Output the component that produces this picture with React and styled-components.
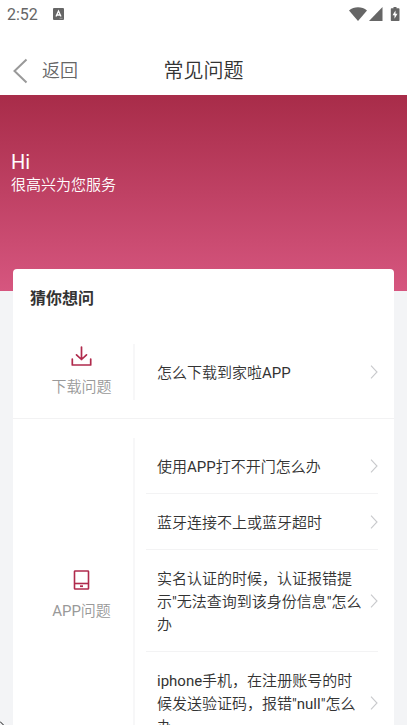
import React from "react";
import styled, { createGlobalStyle } from "styled-components";

const GlobalStyle = createGlobalStyle`
  * { box-sizing: border-box; }
  body {
    margin: 0;
    background: #f3f4f6;
    color: #333;
    font-family: Roboto, "Noto Sans CJK SC DemiLight", "Noto Sans CJK SC", sans-serif;
    font-weight: 400;
  }
`;

const Screen = styled.div`
  position: relative;
  height: 100vh;
  overflow: hidden;
  background: #f3f4f6;
`;

const StatusBar = styled.div`
  display: flex;
  align-items: center;
  justify-content: space-between;
  height: 28px;
  padding: 0 7px;
  background: #fff;
  color: #666;
`;

const StatusGroup = styled.div`
  display: flex;
  align-items: center;
  gap: ${(p) => p.$gap}px;
`;

const Clock = styled.time`
  padding-top: 2px;
  font-size: 16px;
  line-height: 26px;
`;

const Icon = styled.svg`
  display: block;
  flex: none;
`;

const NavBar = styled.header`
  display: grid;
  grid-template-columns: 1fr auto 1fr;
  align-items: center;
  padding: 28px 12px 9px;
  background: #fff;
`;

const BackButton = styled.button`
  display: flex;
  align-items: center;
  justify-self: start;
  gap: 14px;
  padding: 0;
  border: 0;
  background: none;
  color: #666;
  font: inherit;
  font-size: 18px;
  line-height: 28px;
  cursor: pointer;
`;

const Title = styled.h1`
  margin: 0;
  font-size: 20px;
  font-weight: inherit;
  line-height: 30px;
`;

const Hero = styled.section`
  height: 196px;
  padding: 56px 11px 0;
  background: linear-gradient(#a82c49, #d6567f);
  color: #fff;
`;

const Greeting = styled.p`
  margin: 0;
  font-size: ${(p) => (p.$large ? 20 : 15)}px;
  line-height: 23px;
`;

const Card = styled.main`
  margin: -22px 13px 0;
  border-radius: 4px;
  background: #fff;
`;

const CardTitle = styled.h2`
  margin: 0;
  padding: 18px 17px 15px;
  font-family: Roboto, "Noto Sans CJK SC", sans-serif;
  font-size: 16px;
  font-weight: 700;
  line-height: 24px;
`;

const Section = styled.section`
  display: flex;
  padding: 18px 16px 18px 17px;
  border-bottom: 1px solid #f2f2f3;
  & + & { padding-top: 19px; }
`;

const Category = styled.div`
  display: flex;
  flex: none;
  flex-direction: column;
  align-items: center;
  justify-content: center;
  gap: 10px;
  width: 105px;
  border-right: 2px solid #f7f7f8;
`;

const CategoryName = styled.h3`
  margin: 0;
  color: #999;
  font-size: 15px;
  font-weight: inherit;
  line-height: 23px;
`;

const Questions = styled.ul`
  flex: 1;
  min-width: 0;
  margin: 0;
  padding: 0 0 0 11px;
  list-style: none;
`;

const QuestionItem = styled.li`
  border-bottom: 1px solid #f3f3f4;
  &:last-child { border-bottom-color: transparent; }
`;

const QuestionLink = styled.a`
  display: flex;
  align-items: center;
  justify-content: space-between;
  gap: 4px;
  padding: 15px 0 14px 11px;
  color: #333;
  font-size: 15px;
  line-height: 23px;
  text-decoration: none;
`;

const QuestionText = styled.span`
  padding-top: 3px;
`;

const Pointer = styled(Icon)`
  position: absolute;
  bottom: 0;
  left: 0;
`;

const ChevronRight = () => (
  <Icon width="8" height="14" viewBox="0 0 8 14" fill="none" stroke="#c8c9cc" aria-hidden="true">
    <path d="M1 .7 7 7 1 13.3" strokeWidth="1.1" />
  </Icon>
);

const DownloadIcon = () => (
  <Icon width="21" height="20" viewBox="0 0 21 20" fill="none" stroke="#b02a4c" strokeWidth="1.7" strokeLinecap="round" strokeLinejoin="round" aria-hidden="true">
    <path d="M10.500 1v12.500M5.500 8.800l5 4.700 5-4.700M1.300 13v6h18.400V13" />
  </Icon>
);

const PhoneIcon = () => (
  <Icon width="21" height="20" viewBox="0 0 21 20" fill="none" stroke="#b02a4c" strokeWidth="1.600" aria-hidden="true">
    <rect x="3.500" y="1" width="14" height="18" rx=".6" />
    <path d="M3.500 13.500h14" />
    <path d="M9 16.200h3" strokeWidth="1.800" />
  </Icon>
);

const sections = [
  { name: "下载问题", icon: DownloadIcon, questions: ["怎么下载到家啦APP"] },
  {
    name: "APP问题",
    icon: PhoneIcon,
    questions: [
      "使用APP打不开门怎么办",
      "蓝牙连接不上或蓝牙超时",
      "实名认证的时候，认证报错提示\"无法查询到该身份信息\"怎么办",
      "iphone手机，在注册账号的时候发送验证码，报错\"null\"怎么办",
    ],
  },
];

export default function App() {
  return (
    <Screen>
      <GlobalStyle />
      <StatusBar>
        <StatusGroup $gap={15}>
          <Clock>2:52</Clock>
          <Icon width="11" height="12" viewBox="0 0 11 12" aria-hidden="true">
            <rect width="11" height="12" rx="1" fill="#666" />
            <path d="M3 8.5 5.5 3 8 8.5M4 7h3" fill="none" stroke="#fff" strokeWidth="1.3" />
            <path d="M6.5 10.3h3" stroke="#aaa" strokeWidth=".8" />
          </Icon>
        </StatusGroup>
        <StatusGroup $gap={2}>
          <Icon width="18" height="14" viewBox="0 0 18 14" fill="#666" aria-hidden="true">
            <path d="M0 3.4C5-.9 13-.9 18 3.4L9 14z" />
          </Icon>
          <Icon width="14" height="14" viewBox="0 0 14 14" fill="#666" aria-hidden="true">
            <path d="M13.5 0v14H0z" />
          </Icon>
          <Icon width="15" height="14" viewBox="0 0 15 14" aria-hidden="true">
            <path d="M8.500 0h3v1.300h2.300q.7 0 .7.8v11.100q0 .8-.7.8h-7.300q-.7 0-.7-.8V2.100q0-.8.7-.8h2z" fill="#666" />
            <path d="M10.500 3.500 7.500 8.300h2v3.400l3-4.900h-2z" fill="#fff" />
          </Icon>
        </StatusGroup>
      </StatusBar>
      <NavBar>
        <BackButton type="button">
          <Icon width="16" height="26" viewBox="0 0 16 26" fill="none" stroke="#999" strokeWidth="2" aria-hidden="true">
            <path d="M14.500 1.500 2.500 13l12 11.500" />
          </Icon>
          返回
        </BackButton>
        <Title>常见问题</Title>
      </NavBar>
      <Hero>
        <Greeting $large>Hi</Greeting>
        <Greeting>很高兴为您服务</Greeting>
      </Hero>
      <Card>
        <CardTitle>猜你想问</CardTitle>
        {sections.map(({ name, icon: CategoryIcon, questions }) => (
          <Section key={name}>
            <Category>
              <CategoryIcon />
              <CategoryName>{name}</CategoryName>
            </Category>
            <Questions>
              {questions.map((question) => (
                <QuestionItem key={question}>
                  <QuestionLink href="#">
                    <QuestionText>{question}</QuestionText>
                    <ChevronRight />
                  </QuestionLink>
                </QuestionItem>
              ))}
            </Questions>
          </Section>
        ))}
      </Card>
      <Pointer width="4" height="4" viewBox="0 0 4 4" fill="none" stroke="#111" aria-hidden="true">
        <path d="M0 .5 3.500 4" />
      </Pointer>
    </Screen>
  );
}
